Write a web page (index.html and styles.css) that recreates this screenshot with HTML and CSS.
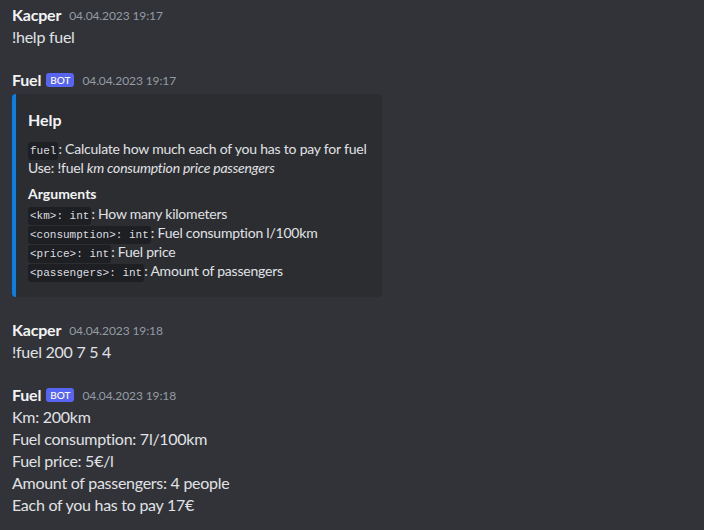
FILE: index.html
```html
<!DOCTYPE html>
<html>
<head>
<meta charset="utf-8">
<link rel="stylesheet" href="styles.css">
</head>
<body>
<div class="chat">
  <div class="message">
    <div class="header"><span class="name">Kacper</span><span class="time">04.04.2023 19:17</span></div>
    <div class="content">!help fuel</div>
  </div>

  <div class="message">
    <div class="header"><span class="name">Fuel</span><span class="badge">BOT</span><span class="time">04.04.2023 19:17</span></div>
    <div class="embed">
      <div class="embed-title">Help</div>
      <div class="embed-desc">
        <div class="line"><code>fuel</code>: Calculate how much each of you has to pay for fuel</div>
        <div class="line">Use: !fuel <em>km consumption price passengers</em></div>
      </div>
      <div class="field">
        <div class="field-name">Arguments</div>
        <div class="line"><code>&lt;km&gt;: int</code>: How many kilometers</div>
        <div class="line"><code>&lt;consumption&gt;: int</code>: Fuel consumption l/100km</div>
        <div class="line"><code>&lt;price&gt;: int</code>: Fuel price</div>
        <div class="line"><code>&lt;passengers&gt;: int</code>: Amount of passengers</div>
      </div>
    </div>
  </div>

  <div class="message">
    <div class="header"><span class="name">Kacper</span><span class="time">04.04.2023 19:18</span></div>
    <div class="content">!fuel 200 7 5 4</div>
  </div>

  <div class="message">
    <div class="header"><span class="name">Fuel</span><span class="badge">BOT</span><span class="time">04.04.2023 19:18</span></div>
    <div class="content">
      <div>Km: 200km</div>
      <div>Fuel consumption: 7l/100km</div>
      <div>Fuel price: 5€/l</div>
      <div>Amount of passengers: 4 people</div>
      <div>Each of you has to pay 17€</div>
    </div>
  </div>
</div>
</body>
</html>
```

FILE: styles.css
```css
html, body {
  margin: 0;
  padding: 0;
  background: #313338;
}
body {
  font-family: Lato, "Noto Sans", sans-serif;
  color: #dbdee1;
  width: 704px;
  height: 530px;
  overflow: hidden;
}
.chat {
  display: flex;
  flex-direction: column;
  gap: 21px;
  padding: 4px 12px 0 12px;
}
.header {
  display: flex;
  align-items: center;
  height: 22px;
  line-height: 22px;
}
.name {
  font-size: 16px;
  font-weight: 700;
  letter-spacing: -0.2px;
  color: #f2f3f5;
}
.badge {
  background: #5865f2;
  color: #ffffff;
  font-size: 10px;
  font-weight: 500;
  line-height: 14px;
  height: 14px;
  padding: 0 4px;
  border-radius: 3px;
  margin-left: 5px;
  margin-top: -1px;
}
.time {
  font-size: 12px;
  color: #949ba4;
  margin-left: 8px;
  padding-top: 1px;
  letter-spacing: -0.1px;
}
.content {
  font-size: 16px;
  line-height: 22px;
  letter-spacing: -0.27px;
  color: #e0e2e5;
}
.embed {
  margin-top: 3px;
  margin-bottom: 1px;
  width: 370px;
  box-sizing: border-box;
  background: #2b2d31;
  border-left: 4px solid #0b7ee6;
  border-radius: 4px;
  padding: 15px 16px 17px 12px;
}
.embed-title {
  font-size: 16px;
  font-weight: 700;
  line-height: 22px;
  color: #f2f3f5;
}
.embed-desc {
  margin-top: 8px;
  font-size: 14px;
}
.line {
  font-size: 14px;
  line-height: 19px;
  height: 19px;
  white-space: nowrap;
  letter-spacing: -0.22px;
  color: #e0e2e5;
}
.field {
  margin-top: 7px;
}
.field-name {
  font-size: 14px;
  font-weight: 700;
  line-height: 20px;
  height: 20px;
  color: #f2f3f5;
}
code {
  font-family: "Liberation Mono", "DejaVu Sans Mono", monospace;
  font-size: 11px;
  line-height: 12px;
  letter-spacing: 0;
  background: #1e1f22;
  color: #dbdee1;
  padding: 3px 2px;
  border-radius: 3px;
}
em {
  font-style: italic;
}
```
